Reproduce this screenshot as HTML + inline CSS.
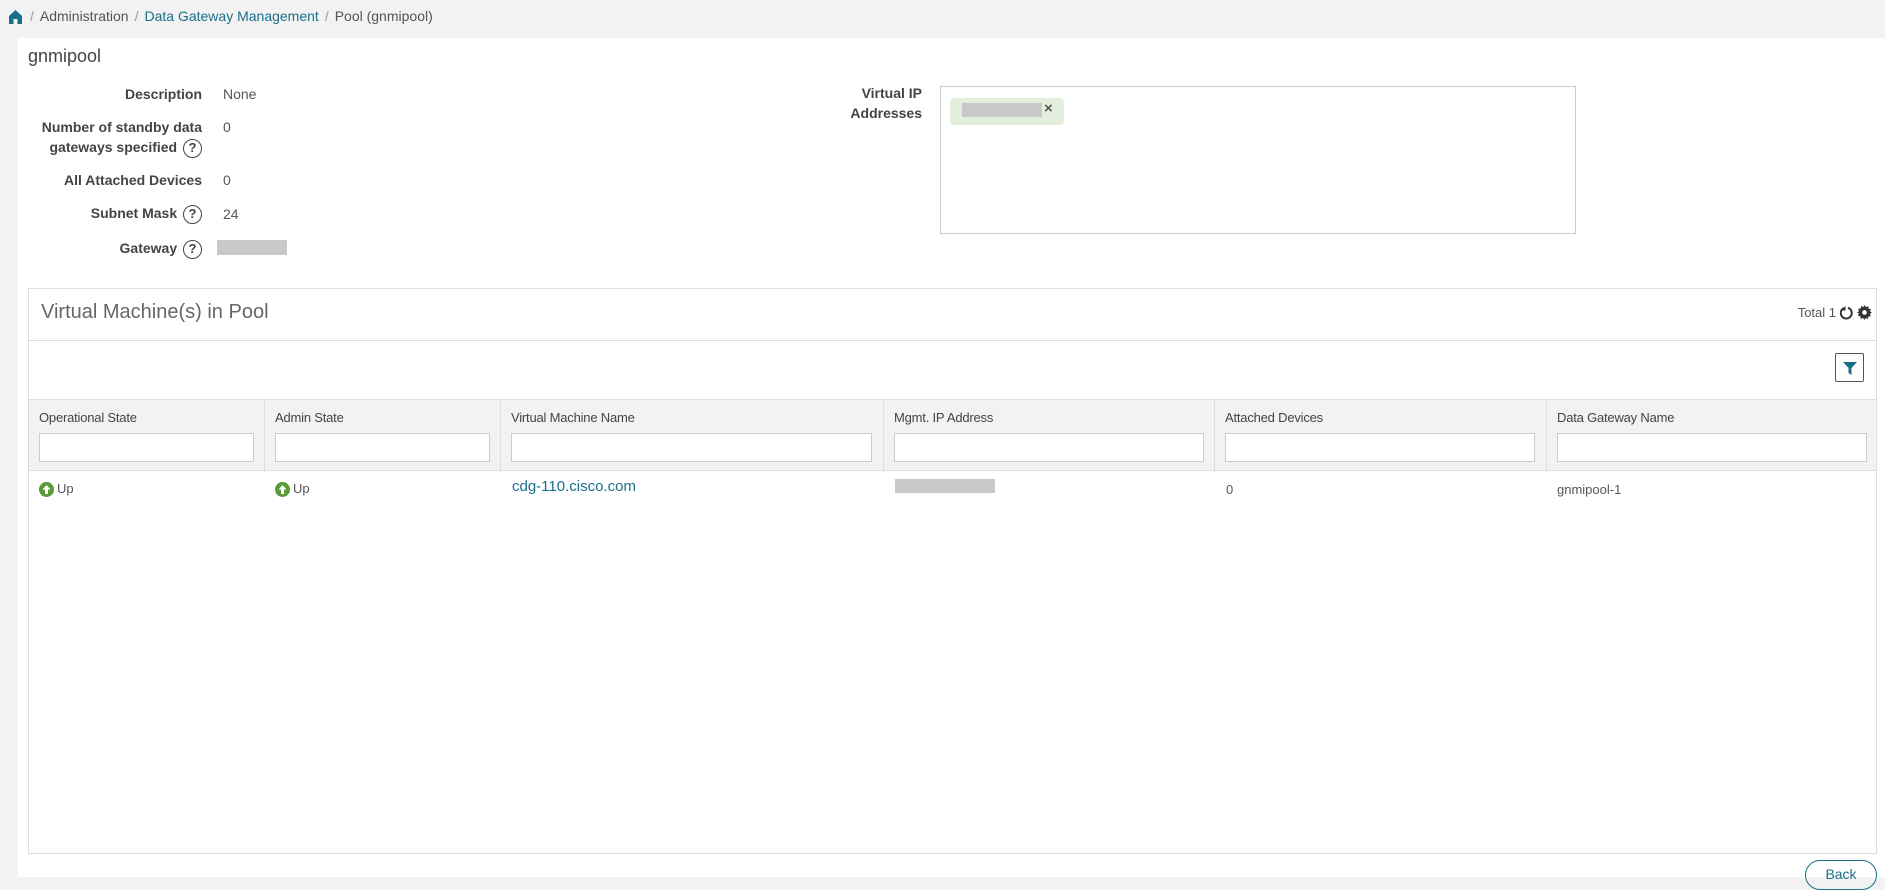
<!DOCTYPE html>
<html><head><meta charset="utf-8"><style>
*{box-sizing:border-box;margin:0;padding:0}
body{width:1885px;height:877px;background:#f2f2f2;font-family:"Liberation Sans",Arial,sans-serif;position:relative;overflow:hidden;color:#333}
.a{position:absolute}
.crumb{top:8px;left:30px;font-size:14px;color:#555;white-space:nowrap}
.crumb .l{color:#1a6e8a}
.crumb .s{color:#999;margin:0 6px}
.main{left:18px;top:38px;width:1867px;height:839px;background:#fff}
.lbl{font-size:14px;font-weight:bold;color:#444;text-align:right;width:190px;left:12px;line-height:20px}
.val{font-size:14px;color:#555;left:223px}
.q{display:inline-block;width:19px;height:19px;border:1.5px solid #444;border-radius:50%;font-size:13px;text-align:center;line-height:16px;font-weight:bold;vertical-align:middle;margin-left:2px}
.gray{background:#c8c8c8}
.panel{left:28px;top:288px;width:1849px;height:566px;border:1px solid #ddd}
.col{position:absolute;top:0;height:72px;border-right:1px solid #ddd}
.hd{font-size:13px;color:#444;position:absolute;top:10px;left:10px;letter-spacing:-0.2px}
.inp{position:absolute;top:33px;left:10px;height:29px;background:#fff;border:1px solid #ccc}
.cell{position:absolute;font-size:13px;color:#555}
.up{display:inline-block;width:15px;height:15px;border-radius:50%;background:#5a9a3a;vertical-align:middle;margin-right:3px;position:relative}
</style></head><body>
<svg class="a" style="left:9px;top:10px" width="13" height="14" viewBox="0 0 13 14"><path d="M6.5 0L0 6v8h4.5V9h4v5H13V6z" fill="#1a6e8a"/></svg>
<div class="a crumb"><span class="s" style="margin-left:0">/</span>Administration<span class="s">/</span><span class="l">Data Gateway Management</span><span class="s">/</span>Pool (gnmipool)</div>
<div class="a main"></div>
<div class="a" style="left:28px;top:46px;font-size:18px;color:#444">gnmipool</div>
<div class="a lbl" style="top:84px">Description</div><div class="a val" style="top:86px">None</div>
<div class="a lbl" style="top:117px">Number of standby data<br>gateways specified <span class="q">?</span></div><div class="a val" style="top:119px">0</div>
<div class="a lbl" style="top:170px">All Attached Devices</div><div class="a val" style="top:172px">0</div>
<div class="a lbl" style="top:203px">Subnet Mask <span class="q">?</span></div><div class="a val" style="top:206px">24</div>
<div class="a lbl" style="top:238px">Gateway <span class="q">?</span></div><div class="a gray" style="left:217px;top:240px;width:70px;height:15px"></div>
<div class="a lbl" style="top:83px;left:732px">Virtual IP<br>Addresses</div>
<div class="a" style="left:940px;top:86px;width:636px;height:148px;border:1px solid #ccc"></div>
<div class="a" style="left:950px;top:98px;width:114px;height:27px;background:#e3efdc;border-radius:4px"></div>
<div class="a gray" style="left:962px;top:103px;width:80px;height:14px"></div>
<div class="a" style="left:1044px;top:101px;font-size:15px;font-weight:bold;color:#555;line-height:15px">×</div>
<div class="a panel">
 <div class="a" style="left:12px;top:12px;font-size:20px;font-weight:300;color:#666">Virtual Machine(s) in Pool</div>
 <div class="a" style="right:40px;top:16px;font-size:13px;color:#555">Total 1</div>
 <svg class="a" style="right:22px;top:17px" width="14" height="14" viewBox="0 0 14 14"><path d="M8 1.8A5.5 5.5 0 1 1 4 2" fill="none" stroke="#333" stroke-width="2"/><path d="M5.5 0v4.5H1z" fill="#333"/></svg>
 <svg class="a" style="right:4px;top:16px" width="15" height="15" viewBox="0 0 16 16"><path d="M8 0l1.5 2.2 2.5-1 .3 2.7 2.6.6-1.1 2.4L16 8l-2.2 1.5 1 2.5-2.7.3-.6 2.6-2.4-1.1L8 16l-1.5-2.2-2.5 1-.3-2.7-2.6-.6 1.1-2.4L0 8l2.2-1.5-1-2.5 2.7-.3.6-2.6 2.4 1.1z" fill="#333"/><circle cx="8" cy="8" r="2.5" fill="#fff"/></svg>
 <div class="a" style="left:0;top:51px;width:1847px;border-top:1px solid #ddd"></div>
 <div class="a" style="left:1806px;top:64px;width:29px;height:29px;border:1px solid #555;border-radius:2px"><svg style="position:absolute;left:7px;top:8px" width="14" height="13" viewBox="0 0 14 13"><path d="M0 0h14L8.5 6v7L5.5 11V6z" fill="#1a6e8a"/></svg></div>
 <div class="a" style="left:0;top:110px;width:1847px;height:72px;background:#f2f2f2;border-top:1px solid #ddd;border-bottom:1px solid #ddd">
  <div class="col" style="left:0;width:236px"><span class="hd">Operational State</span><div class="inp" style="width:215px"></div></div>
  <div class="col" style="left:236px;width:236px"><span class="hd">Admin State</span><div class="inp" style="width:215px"></div></div>
  <div class="col" style="left:472px;width:383px"><span class="hd">Virtual Machine Name</span><div class="inp" style="width:361px"></div></div>
  <div class="col" style="left:855px;width:331px"><span class="hd">Mgmt. IP Address</span><div class="inp" style="width:310px"></div></div>
  <div class="col" style="left:1186px;width:332px"><span class="hd">Attached Devices</span><div class="inp" style="width:310px"></div></div>
  <div class="col" style="left:1518px;width:329px;border-right:none"><span class="hd">Data Gateway Name</span><div class="inp" style="width:310px"></div></div>
 </div>
 <div class="cell" style="left:10px;top:192px"><span class="up"><svg width="15" height="15" viewBox="0 0 15 15" style="position:absolute;left:0;top:0"><path d="M7.5 3L3.5 7.5h2.5V12h3V7.5h2.5z" fill="#fff"/></svg></span>Up</div>
 <div class="cell" style="left:246px;top:192px"><span class="up"><svg width="15" height="15" viewBox="0 0 15 15" style="position:absolute;left:0;top:0"><path d="M7.5 3L3.5 7.5h2.5V12h3V7.5h2.5z" fill="#fff"/></svg></span>Up</div>
 <div class="cell" style="left:483px;top:189px;font-size:15px;color:#1a6e8a">cdg-110.cisco.com</div>
 <div class="a gray" style="left:866px;top:190px;width:100px;height:14px"></div>
 <div class="cell" style="left:1197px;top:193px">0</div>
 <div class="cell" style="left:1528px;top:193px">gnmipool-1</div>
</div>
<div class="a" style="left:1805px;top:860px;width:72px;height:30px;border:1.5px solid #1a6e8a;border-radius:15px;text-align:center;font-size:14px;color:#1a6e8a;padding-top:5px">Back</div>
</body></html>
